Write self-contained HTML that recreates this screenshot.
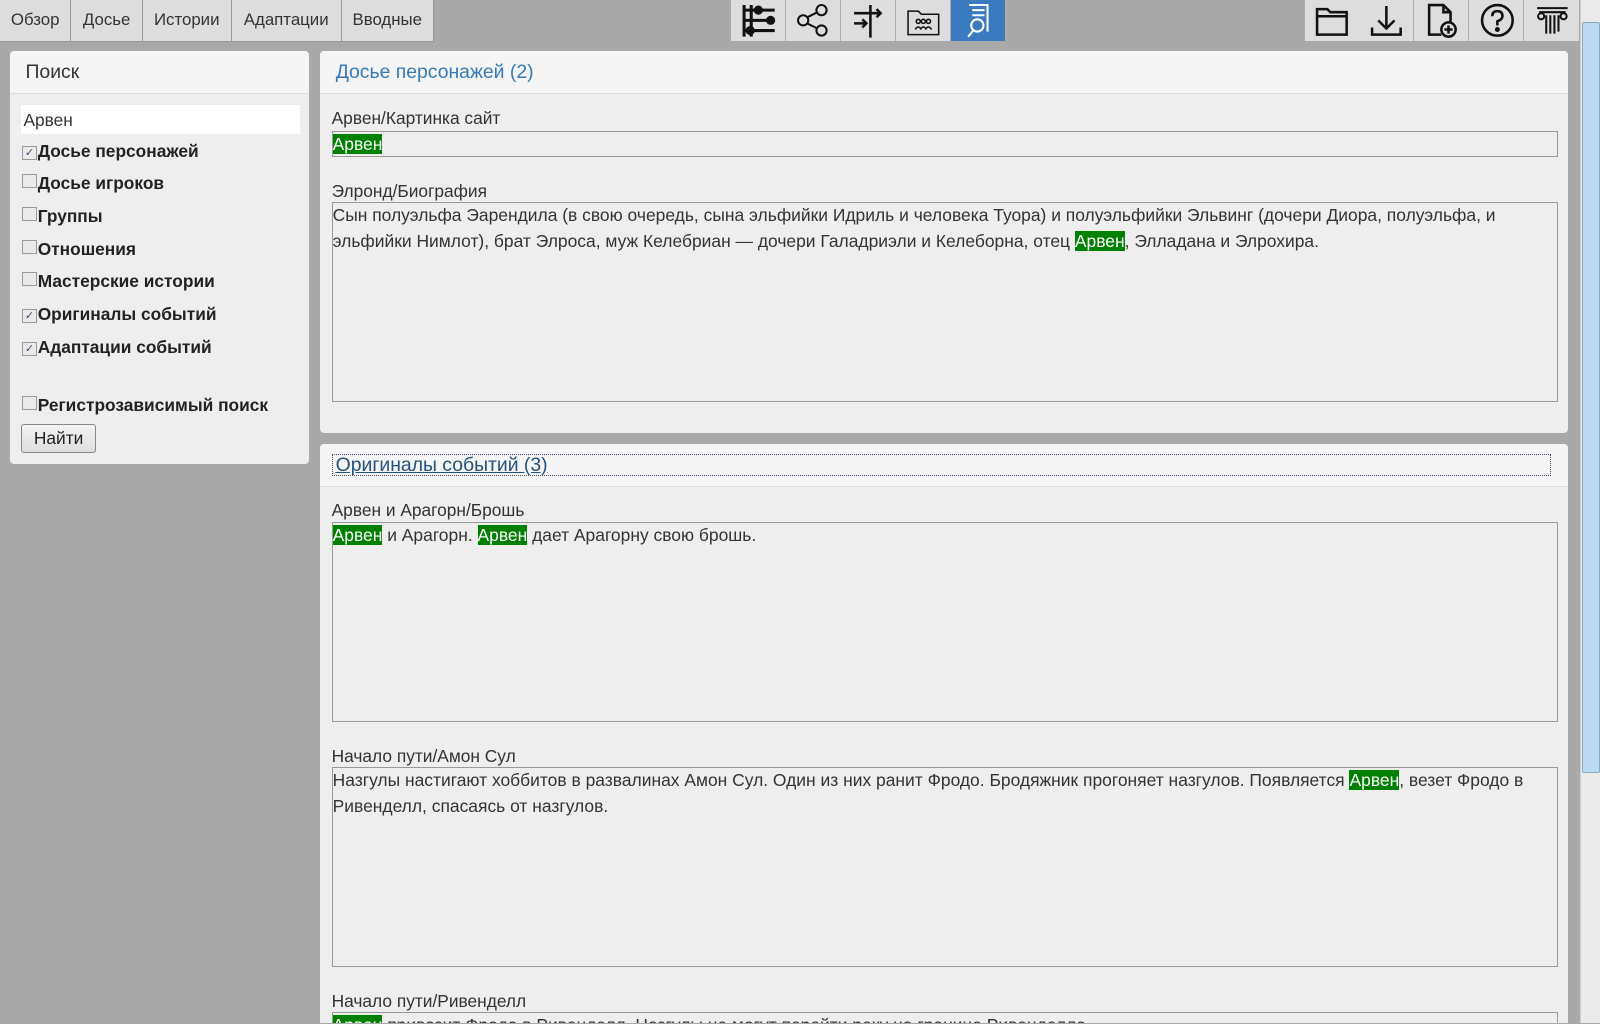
<!DOCTYPE html>
<html><head><meta charset="utf-8"><style>
html,body{margin:0;padding:0;overflow:hidden;width:1600px;height:1024px;background:#a9a9a9;}
#w{position:relative;width:1568px;height:1003px;overflow:hidden;background:#a9a9a9;zoom:1.0204;font-family:"Liberation Sans",Arial,sans-serif;font-size:17px;color:#333;}
.a{position:absolute;}
.tab{position:absolute;top:0;height:40px;background:#ddd;border-right:1px solid #999;border-bottom:1px solid #999;line-height:40px;text-align:center;color:#333;font-size:16.5px;}
.ib{position:absolute;top:0;width:53px;height:40px;background:#ddd;border-right:1px solid #aaa;}
.ib svg{position:absolute;left:9px;top:3px;}
.panel{position:absolute;background:#eee;border-radius:4px;}
.ph{height:41px;border-bottom:1px solid #ddd;background:#f5f5f5;border-radius:4px 4px 0 0;line-height:42px;padding-left:15px;font-size:19px;}
.lbl{position:absolute;left:325px;}
.box{position:absolute;left:325px;width:1200px;border:1px solid #999;background:#eee;line-height:25px;font-size:17.1px;color:#333;padding:0;}
.h{background:#008000;color:#fff;}
.cb{position:absolute;left:22px;font-weight:bold;font-size:17px;color:#222;}
.cb i{display:inline-block;width:12px;height:12px;border:1px solid #999;background:#eaeaea;vertical-align:1px;margin-right:1px;position:relative;font-style:normal;font-size:11px;line-height:12px;text-align:center;color:#447;font-weight:normal;}
</style></head><body><div id="w">
<div class="tab" style="left:0;width:69px">Обзор</div>
<div class="tab" style="left:70px;width:69px">Досье</div>
<div class="tab" style="left:140px;width:86px">Истории</div>
<div class="tab" style="left:227px;width:107px">Адаптации</div>
<div class="tab" style="left:335px;width:89px">Вводные</div>

<div class="ib" style="left:716px"><svg width="36" height="34" viewBox="0 0 36 34" fill="none" stroke="#111" stroke-width="3"><path d="M4 2v31M11 2v31M4 7h30M4 17h30M4 27h30"/><circle cx="18" cy="7" r="3" fill="#111"/><circle cx="30" cy="17" r="3" fill="#111"/><circle cx="10" cy="27" r="3" fill="#111"/></svg></div>
<div class="ib" style="left:770px"><svg width="36" height="34" viewBox="0 0 36 34" fill="none" stroke="#111" stroke-width="2"><circle cx="8" cy="17" r="5"/><circle cx="26" cy="7" r="5"/><circle cx="26" cy="27" r="5"/><path d="M12 14l10-5M12 20l10 5"/></svg></div>
<div class="ib" style="left:824px"><svg width="36" height="34" viewBox="0 0 36 34" fill="none" stroke="#111" stroke-width="2.5"><path d="M20 2v32M4 10h26M26 6l4 4-4 4M4 20h12M12 16l4 4-4 4"/></svg></div>
<div class="ib" style="left:878px"><svg width="36" height="34" viewBox="0 0 36 34" fill="none" stroke="#111" stroke-width="1.5"><path d="M3 8h10l3 3h17v20H3z"/><circle cx="13" cy="18" r="2"/><circle cx="18" cy="18" r="2"/><circle cx="23" cy="18" r="2"/><path d="M10 26q3-5 6 0M15 26q3-5 6 0M20 26q3-5 6 0"/></svg></div>
<div class="ib" style="left:932px;background:#3a7bbf"><svg width="36" height="34" viewBox="0 0 36 34" fill="none" stroke="#fff" stroke-width="2"><path d="M9 2h18v26M12 7h12M12 12h12"/><circle cx="17" cy="22" r="6"/><path d="M13 27l-5 6"/></svg></div>

<div class="ib" style="left:1278px;border-left:1px solid #aaa"><svg width="36" height="34" viewBox="0 0 36 34" fill="none" stroke="#111" stroke-width="2.5"><path d="M3 6h10l3 3h16v22H3z M3 13h29"/></svg></div>
<div class="ib" style="left:1332px"><svg width="36" height="34" viewBox="0 0 36 34" fill="none" stroke="#111" stroke-width="2.5"><path d="M18 3v22M10 17l8 8 8-8M4 24v7h28v-7"/></svg></div>
<div class="ib" style="left:1386px"><svg width="36" height="34" viewBox="0 0 36 34" fill="none" stroke="#111" stroke-width="2.5"><path d="M18 31H6V2h14l7 7v10M20 2v7h7"/><circle cx="25" cy="26" r="7"/><path d="M25 22v8M21 26h8"/></svg></div>
<div class="ib" style="left:1440px"><svg width="36" height="34" viewBox="0 0 36 34" fill="none" stroke="#111" stroke-width="2.5"><circle cx="18" cy="17" r="15"/><path d="M13 13q0-5 5-5t5 5q0 3-5 5v4"/><circle cx="18" cy="26" r="1.2" fill="#111"/></svg></div>
<div class="ib" style="left:1494px"><svg width="36" height="34" viewBox="0 0 36 34" fill="none" stroke="#111" stroke-width="2"><path d="M3 5h30M5 9h26"/><circle cx="7" cy="13" r="3"/><circle cx="29" cy="13" r="3"/><path d="M12 12v18M16 12v18M20 12v18M24 12v16"/></svg></div>

<div class="a" style="left:1548px;top:0;width:20px;height:1003px;background:#eaeaea;border-left:1px solid #ccc"></div>
<div class="a" style="left:1550px;top:22px;width:16px;height:734px;background:#bcd9f2;border:1px solid #8ab;border-radius:2px"></div>

<div class="panel" style="left:10px;top:50px;width:293px;height:405px">
<div class="ph" style="color:#333">Поиск</div>
</div>
<div class="a" style="left:21px;top:103px;width:271px;height:28px;background:#fff;line-height:30px;padding-left:2px;color:#333">Арвен</div>
<div class="cb" style="top:138px"><i>✓</i>Досье персонажей</div>
<div class="cb" style="top:170px"><i></i>Досье игроков</div>
<div class="cb" style="top:202px"><i></i>Группы</div>
<div class="cb" style="top:234px"><i></i>Отношения</div>
<div class="cb" style="top:266px"><i></i>Мастерские истории</div>
<div class="cb" style="top:298px"><i>✓</i>Оригиналы событий</div>
<div class="cb" style="top:330px"><i>✓</i>Адаптации событий</div>
<div class="cb" style="top:387px"><i></i>Регистрозависимый поиск</div>
<div class="a" style="left:21px;top:416px;width:71px;height:26px;border:1px solid #888;border-radius:3px;background:linear-gradient(#f4f4f4,#ddd);text-align:center;line-height:26px;color:#222">Найти</div>

<div class="panel" style="left:314px;top:50px;width:1223px;height:374px">
<div class="ph" style="color:#337ab7">Досье персонажей (2)</div>
</div>
<div class="lbl" style="top:106px">Арвен/Картинка сайт</div>
<div class="box" style="top:128px;height:24px"><span class="h">Арвен</span></div>
<div class="lbl" style="top:177px">Элронд/Биография</div>
<div class="box" style="top:198px;height:194px">Сын полуэльфа Эарендила (в свою очередь, сына эльфийки Идриль и человека Туора) и полуэльфийки Эльвинг (дочери Диора, полуэльфа, и эльфийки Нимлот), брат Элроса, муж Келебриан — дочери Галадриэли и Келеборна, отец <span class="h">Арвен</span>, Элладана и Элрохира.</div>

<div class="panel" style="left:314px;top:435px;width:1223px;height:568px;border-radius:4px 4px 0 0">
<div class="ph" style="color:#23527c"><span style="display:inline-block;margin-top:-1px;border:1px dotted #446;width:1190px;height:20px;line-height:20px;margin-left:-4px;padding-left:3px;text-decoration:underline">Оригиналы событий (3)</span></div>
</div>
<div class="lbl" style="top:490px">Арвен и Арагорн/Брошь</div>
<div class="box" style="top:512px;height:194px"><span class="h">Арвен</span> и Арагорн. <span class="h">Арвен</span> дает Арагорну свою брошь.</div>
<div class="lbl" style="top:731px">Начало пути/Амон Сул</div>
<div class="box" style="top:752px;height:194px">Назгулы настигают хоббитов в развалинах Амон Сул. Один из них ранит Фродо. Бродяжник прогоняет назгулов. Появляется <span class="h">Арвен</span>, везет Фродо в Ривенделл, спасаясь от назгулов.</div>
<div class="lbl" style="top:971px">Начало пути/Ривенделл</div>
<div class="box" style="top:992px;height:11px;overflow:hidden;border-bottom:none"><span class="h">Арвен</span> привозит Фродо в Ривенделл. Назгулы не могут перейти реку на границе Ривенделла.</div>
</div></body></html>
